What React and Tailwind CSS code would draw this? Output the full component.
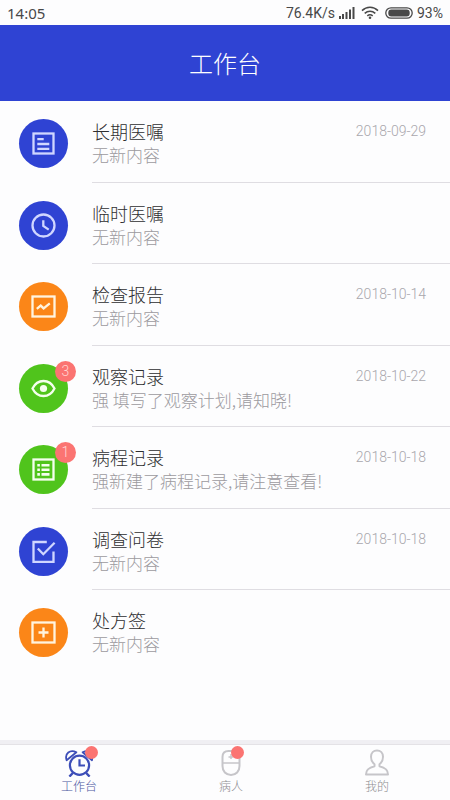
import { useState } from 'react';

const ICONS = {
  order: (
    <>
      <rect x="2.5" y="2.5" width="20" height="20" />
      <path d="M6.3 8.2h6.4M6.3 13h12M6.3 17.8h12" />
    </>
  ),
  clock: (
    <>
      <circle cx="12.5" cy="12.5" r="11" />
      <path d="M12.3 7.2v5.8l5.4 3.6" />
    </>
  ),
  chart: (
    <>
      <rect x="1.5" y="2.5" width="22" height="20" />
      <path d="M5.8 14.8l3.9-3.2 2.9 2.8 6.2-5" />
    </>
  ),
  eye: (
    <>
      <path d="M1.5 12.5C4 7.5 8 5 12.5 5s8.5 2.5 11 7.5C21 17.5 17 20 12.5 20S4 17.5 1.5 12.5z" />
      <circle cx="12.5" cy="12.5" r="3.6" fill="currentColor" stroke="none" />
    </>
  ),
  list: (
    <>
      <rect x="2.5" y="2.5" width="20" height="20" />
      <path d="M6.3 8.2h2.6M6.3 12.8h2.6M6.3 17.4h2.6M10.5 8.2h8M10.5 12.8h8M10.5 17.4h8" strokeWidth="2.6" />
    </>
  ),
  survey: (
    <>
      <path d="M15.8 3H2.5v19.8h20V12.5" />
      <path d="M6.8 9.5l5.5 5.7L23.6 3.8" />
    </>
  ),
  plus: (
    <>
      <rect x="1.5" y="2.5" width="22" height="20" />
      <path d="M12.5 7.5v10M7.5 12.5h10" />
    </>
  ),
};

const ITEMS = [
  { id: 1, icon: 'order', color: 'bg-[#2f43d3] text-[#d0d6ff]', title: '长期医嘱', desc: '无新内容', date: '2018-09-29' },
  { id: 2, icon: 'clock', color: 'bg-[#2f43d3] text-[#d0d6ff]', title: '临时医嘱', desc: '无新内容' },
  { id: 3, icon: 'chart', color: 'bg-[#fb8618] text-[#fff4e0]', title: '检查报告', desc: '无新内容', date: '2018-10-14' },
  { id: 4, icon: 'eye', color: 'bg-[#50c41c] text-[#f4ffee]', title: '观察记录', desc: '强 填写了观察计划,请知晓!', date: '2018-10-22', badge: 3 },
  { id: 5, icon: 'list', color: 'bg-[#50c41c] text-[#f4ffee]', title: '病程记录', desc: '强新建了病程记录,请注意查看!', date: '2018-10-18', badge: 1 },
  { id: 6, icon: 'survey', color: 'bg-[#2f43d3] text-[#d0d6ff]', title: '调查问卷', desc: '无新内容', date: '2018-10-18' },
  { id: 7, icon: 'plus', color: 'bg-[#fb8618] text-[#fff4e0]', title: '处方签', desc: '无新内容' },
];

const TABS = [
  {
    id: 'work',
    label: '工作台',
    dot: true,
    icon: (
      <svg width="28" height="28" viewBox="0 0 28 28" fill="none" stroke="currentColor" strokeWidth="2.2">
        <circle cx="14.5" cy="16.2" r="9.6" />
        <path d="M14.5 10.2v6.3h5.5" />
        <path d="M7.8 24l-3.4 3.6M21.2 24l3.4 3.6" strokeWidth="2.4" />
        <path d="M1.6 11.2C-0.6 4.5 5 0 11.4 3.2z" strokeWidth="1.8" strokeLinejoin="round" />
        <path d="M27 11.2C29.2 4.500 24 0 17.600 3.200z" strokeWidth="1.8" strokeLinejoin="round" />
      </svg>
    ),
  },
  {
    id: 'patient',
    label: '病人',
    dot: true,
    icon: (
      <svg width="24" height="28" viewBox="0 0 24 28" fill="none" stroke="currentColor" strokeWidth="2">
        <path d="M3.5 8c0-4 2.5-6 6-6h5c3.5 0 6 2 6 6v9c0 5.5-3.5 9-8.500 9s-8.500-3.500-8.500-9z" />
        <path d="M3.5 14h17M12 5v5M9.5 8h5" strokeWidth="1.5" />
      </svg>
    ),
  },
  {
    id: 'mine',
    label: '我的',
    icon: (
      <svg width="24" height="28" viewBox="0 0 24 28" fill="none" stroke="currentColor" strokeWidth="2" strokeLinejoin="round">
        <path d="M9.5 15.2C7.200 13.500 6 11 6 7.800 6 4 8.500 1.500 12 1.500s6 2.500 6 6.300c0 3.200-1.200 5.700-3.500 7.400v2c5.500 1.500 8.500 3.300 8.500 8.300H1c0-5 3-6.800 8.500-8.300z" />
      </svg>
    ),
  },
];

function StatusBar() {
  return (
    <div className="h-[25px] px-[7px] flex items-center justify-between font-normal text-[#484848]">
      <span className="font-['Noto_Sans'] text-[15px] leading-6">14:05</span>
      <div className="flex items-center gap-1 font-[Roboto] text-sm">
        <span>76.4K/s</span>
        <svg width="16" height="12" viewBox="0 0 16 12" fill="currentColor">
          <rect x="0" y="9" width="2" height="3" />
          <rect x="3" y="7" width="2" height="5" />
          <rect x="6.5" y="5" width="2" height="7" />
          <rect x="10" y="2.5" width="2" height="9.5" />
          <rect x="13.5" y="0" width="2" height="12" />
        </svg>
        <svg className="mx-0.5" width="18" height="13" viewBox="0 0 18 13" fill="none" stroke="currentColor" strokeWidth="1.5">
          <path d="M1 4.6c4.6-4.400 11.400-4.400 16 0M3.700 7.400c3.100-2.900 7.500-2.900 10.600 0M6.300 9.900c1.600-1.400 3.800-1.400 5.400 0" />
          <circle cx="9" cy="11.7" r="1.3" fill="currentColor" stroke="none" />
        </svg>
        <svg width="28" height="12" viewBox="0 0 28 12" fill="none">
          <rect x="0.8" y="0.8" width="26.4" height="10.4" rx="5.2" stroke="currentColor" strokeWidth="1.3" />
          <rect x="3.3" y="2.5" width="21.4" height="7" rx="3" fill="currentColor" />
        </svg>
        <span>93%</span>
      </div>
    </div>
  );
}

function ItemRow({ item }) {
  return (
    <li className="group odd:h-[82px] even:h-[81px]">
      <button type="button" className="w-full h-full pl-[19px] flex gap-6 text-left">
        <span className={`relative mt-[18px] w-[49px] h-[49px] shrink-0 rounded-full flex items-center justify-center ${item.color}`}>
          <svg width="25" height="25" viewBox="0 0 25 25" fill="none" stroke="currentColor" strokeWidth="2.3">
            {ICONS[item.icon]}
          </svg>
          {item.badge && (
            <span className="absolute -top-[3px] left-9 w-[21px] h-[21px] rounded-full bg-[#fb7472] text-[#ffd8d4] font-[Roboto] font-light text-sm leading-5 text-center">
              {item.badge}
            </span>
          )}
        </span>
        <span className="flex-1 min-w-0 h-full pt-[18px] pr-6 block border-b border-[#dfdde2] group-last:border-b-0">
          <span className="flex items-center justify-between leading-6">
            <span className="text-lg leading-6 text-[#2e2e30]">{item.title}</span>
            {item.date && (
              <span className="font-[Roboto] font-light text-sm leading-6 text-[#a9a7ad]">{item.date}</span>
            )}
          </span>
          <span className="block text-[17px] leading-6 text-[#9c9a9e] truncate">{item.desc}</span>
        </span>
      </button>
    </li>
  );
}

export default function App() {
  const [tab, setTab] = useState('work');

  return (
    <div className="min-h-screen flex flex-col bg-[#fdfdfe] font-['Noto_Sans_CJK_SC',sans-serif] font-light">
      <StatusBar />

      <header className="h-[76px] flex items-center justify-center bg-[#2f43d3]">
        <h1 className="text-2xl text-white">工作台</h1>
      </header>

      <main className="flex-1">
        <ul>
          {ITEMS.map((item) => (
            <ItemRow key={item.id} item={item} />
          ))}
        </ul>
      </main>

      {/* Tab bar */}
      <nav className="border-t-4 border-[#f0eff3]">
        <div className="h-14 px-[61px] pt-1 flex items-start justify-between border-t border-[#e4e2e6]">
          {TABS.map((t) => (
            <button
              key={t.id}
              type="button"
              onClick={() => setTab(t.id)}
              className={`relative flex flex-col items-center ${tab === t.id ? 'text-[#3d4eb8]' : 'text-[#c6c5c9]'}`}
            >
              {t.icon}
              {t.dot && <span className="absolute -top-[3px] -right-px w-[13px] h-[13px] rounded-full bg-[#fb7472]" />}
              <span className={`text-xs leading-[18px] ${tab === t.id ? 'text-[#4a56a0]' : 'text-[#8e8d92]'}`}>{t.label}</span>
            </button>
          ))}
        </div>
      </nav>
    </div>
  );
}
